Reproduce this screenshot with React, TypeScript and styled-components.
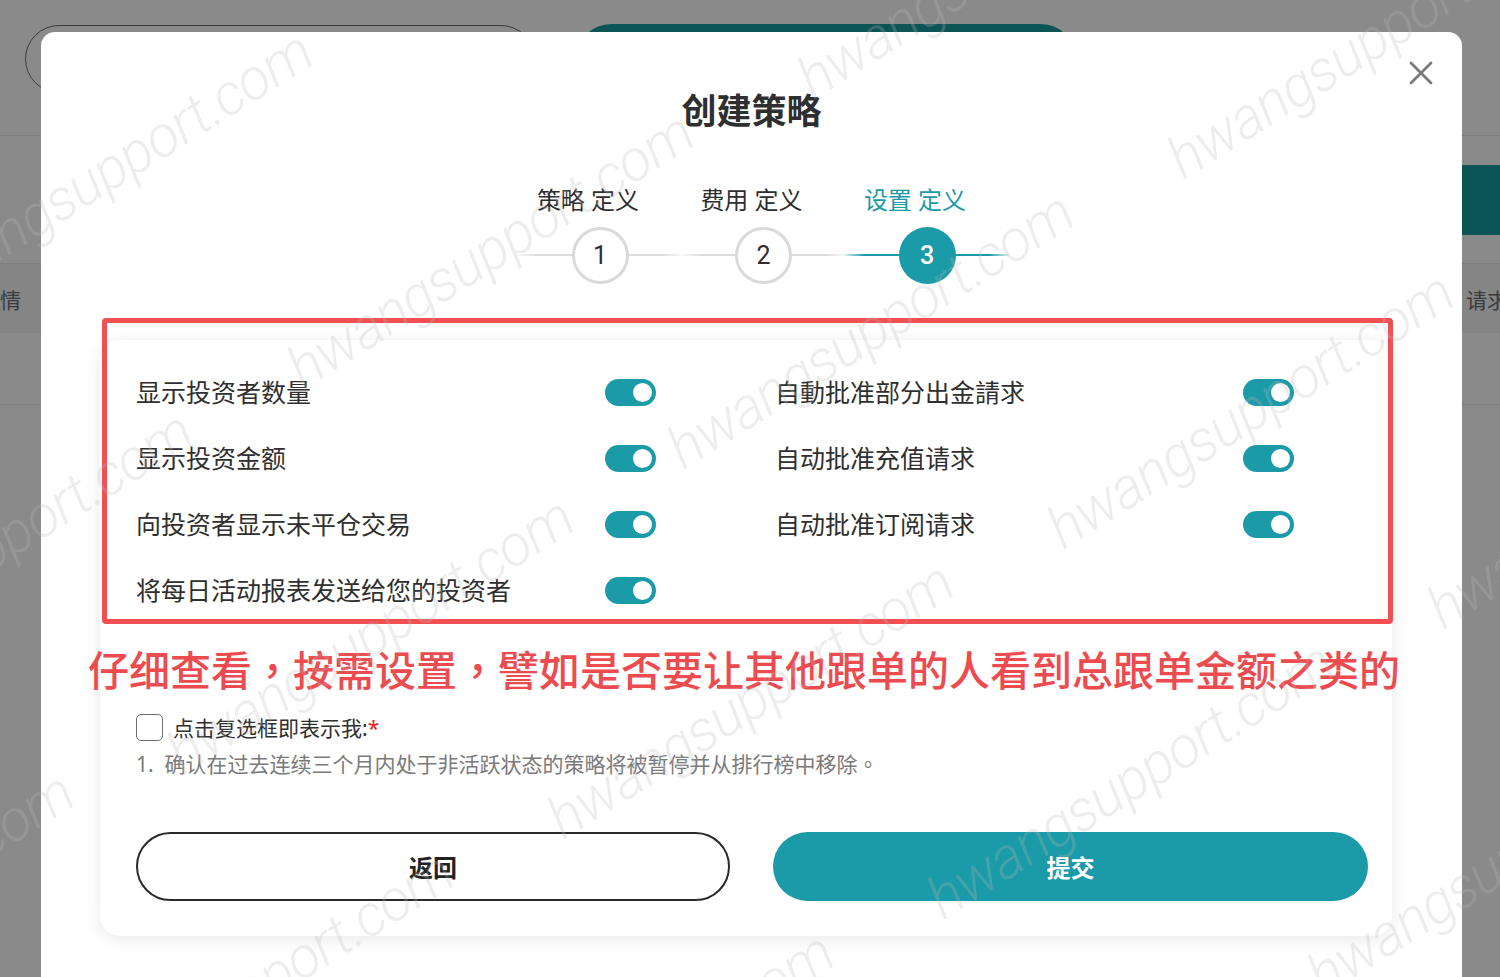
import React from "react";
import styled, { createGlobalStyle } from "styled-components";

const GlobalStyle = createGlobalStyle`
  html, body {
    margin: 0;
    padding: 0;
    width: 1500px;
    height: 977px;
    overflow: hidden;
    font-family: "Noto Sans", "Noto Sans CJK SC", sans-serif;
  }
  * { box-sizing: border-box; }
`;

const TEAL = "#1b9aa7";
const CJK = `"Noto Sans", "Noto Sans CJK SC", sans-serif`;
const CJK_TC = `"Noto Sans", "Noto Sans CJK TC", sans-serif`;

/* ---------- dimmed page behind the dialog ---------- */

const Page = styled.div`
  position: relative;
  width: 1500px;
  height: 977px;
  overflow: hidden;
  background: #8a8a8b;
  display: flex;
  flex-direction: column;
`;

const PageHeader = styled.div`
  height: 136px;
  display: flex;
  align-items: flex-start;
  gap: 42px;
  padding: 24px 0 0 25px;
  border-bottom: 1px solid #7e7e7f;
`;

const GhostPill = styled.div`
  width: 510px;
  height: 68px;
  margin-top: 1px;
  border: 1.5px solid #3d3d3e;
  border-radius: 34px;
`;

const SolidPill = styled.div`
  width: 498px;
  height: 68px;
  border-radius: 34px;
  background: #0d5457;
`;

const Toolbar = styled.div`
  height: 128px;
  display: flex;
  justify-content: flex-end;
  align-items: flex-start;
  padding-top: 29px;
  border-bottom: 1px solid #7e7e7f;
`;

const ToolbarButton = styled.div`
  width: 220px;
  height: 70px;
  background: #0d5457;
`;

const TableHead = styled.div`
  height: 69px;
  display: flex;
  align-items: center;
  justify-content: space-between;
  background: #858586;
  color: #3b3b3c;
  font-family: ${CJK};
  font-size: 21px;
`;

const HeadCell = styled.span<{ $shift: number }>`
  margin-left: ${(p) => p.$shift}px;
  white-space: nowrap;
`;

const TableRow = styled.div`
  height: 72px;
  border-bottom: 1px solid #7e7e7f;
`;

/* ---------- dialog ---------- */

const Overlay = styled.div`
  position: absolute;
  inset: 0;
  padding: 32px 0 0 41px;
  overflow: hidden;
`;

const Modal = styled.div`
  position: relative;
  width: 1421px;
  height: 1000px;
  background: #ffffff;
  border-radius: 14px;
  display: flex;
  flex-direction: column;
  align-items: center;
  padding-top: 57px;
`;

const CloseButton = styled.button`
  position: absolute;
  top: 28px;
  right: 28px;
  width: 26px;
  height: 26px;
  padding: 0;
  border: 0;
  background: none;
  color: #7a7a7a;
  display: flex;
`;

const Title = styled.h1`
  margin: 0;
  font-family: ${CJK};
  font-size: 35px;
  line-height: 44px;
  font-weight: 700;
  color: #2f2f2f;
`;

const Stepper = styled.div`
  display: flex;
  margin-top: 52px;
`;

const Step = styled.div`
  width: 163.5px;
  display: flex;
  flex-direction: column;
  align-items: center;
`;

const StepLabel = styled.div<{ $active?: boolean }>`
  font-family: ${CJK};
  font-size: 24px;
  line-height: 30px;
  color: ${(p) => (p.$active ? TEAL : "#2e2e2e")};
  white-space: pre;
`;

const StepTrack = styled.div<{ $active?: boolean }>`
  position: relative;
  width: 100%;
  height: 58px;
  margin-top: 11px;
  margin-left: 24px;
  display: flex;
  align-items: center;
  justify-content: center;
  background: linear-gradient(
      90deg,
      ${(p) => (p.$active ? "rgba(27,154,167,0.15)" : "rgba(221,221,221,0.2)")} 0%,
      ${(p) => (p.$active ? TEAL : "#dcdcdc")} 12%,
      ${(p) => (p.$active ? TEAL : "#dcdcdc")} 88%,
      ${(p) => (p.$active ? "rgba(27,154,167,0.15)" : "rgba(221,221,221,0.2)")} 100%
    )
    center / 100% 2px no-repeat;
`;

const StepCircle = styled.div<{ $active?: boolean }>`
  width: 57px;
  height: 57px;
  border-radius: 50%;
  display: flex;
  align-items: center;
  justify-content: center;
  font-family: "Roboto", "Noto Sans", sans-serif;
  font-size: 25px;
  font-weight: ${(p) => (p.$active ? 500 : 400)};
  color: ${(p) => (p.$active ? "#ffffff" : "#2e2e2e")};
  background: ${(p) => (p.$active ? TEAL : "#ffffff")};
  border: ${(p) => (p.$active ? "none" : "3px solid #dadada")};
`;

const Card = styled.div`
  position: relative;
  align-self: flex-start;
  width: 1292px;
  margin: 56px 0 0 59px;
  padding: 18px 0 35px 36px;
  background: #ffffff;
  border-radius: 20px;
  box-shadow: 0 3px 18px rgba(0, 0, 0, 0.09);
`;

const Highlight = styled.div`
  position: absolute;
  top: -22px;
  left: 2px;
  width: 1291px;
  height: 306px;
  border: 5px solid #f24f53;
  border-radius: 4px;
  pointer-events: none;
`;

const SettingsGrid = styled.div`
  display: grid;
  grid-template-columns: 520px 519px;
  column-gap: 119px;
`;

const SettingRow = styled.div`
  height: 66px;
  display: flex;
  align-items: center;
  justify-content: space-between;
`;

const SettingLabel = styled.span`
  font-family: ${CJK};
  font-size: 25px;
  color: #2f2f2f;
`;

const Toggle = styled.span`
  position: relative;
  width: 51px;
  height: 27px;
  margin-top: 2px;
  border-radius: 14px;
  background: ${TEAL};
  display: flex;
  align-items: center;
  justify-content: flex-end;
  padding-right: 4px;
`;

const Knob = styled.span`
  width: 19px;
  height: 19px;
  border-radius: 50%;
  background: #ffffff;
`;

const Note = styled.div`
  margin: 23px 0 0 -48px;
  font-family: ${CJK_TC};
  font-size: 41px;
  line-height: 50px;
  font-weight: 500;
  color: #ec4b50;
  white-space: nowrap;
`;

const AgreeRow = styled.label`
  display: flex;
  align-items: center;
  gap: 10px;
  margin-top: 17px;
  font-family: ${CJK};
  font-size: 21px;
  color: #2f2f2f;
`;

const CheckBox = styled.span`
  width: 27px;
  height: 27px;
  border: 1.5px solid #6f6f6f;
  border-radius: 5px;
`;

const Required = styled.span`
  color: #e02020;
`;

const Terms = styled.div`
  margin-top: 8px;
  font-family: ${CJK_TC};
  font-size: 21px;
  line-height: 28px;
  color: #7a7a7a;
  white-space: pre;
`;

const Actions = styled.div`
  display: grid;
  grid-template-columns: 594px 595px;
  column-gap: 43px;
  margin-top: 54px;
`;

const ActionButton = styled.button<{ $primary?: boolean }>`
  height: 69px;
  border-radius: 35px;
  font-family: ${CJK};
  font-size: 24px;
  font-weight: 700;
  color: ${(p) => (p.$primary ? "#ffffff" : "#222222")};
  background: ${(p) => (p.$primary ? TEAL : "#ffffff")};
  border: ${(p) => (p.$primary ? "none" : "2px solid #2a2a2a")};
`;

/* ---------- site watermark ---------- */

const MarkLayer = styled.div`
  position: absolute;
  inset: 0;
  pointer-events: none;
  overflow: hidden;
`;

const Mark = styled.span`
  position: absolute;
  transform: translate(-50%, -50%) rotate(-32deg);
  font-family: "Roboto", "DejaVu Sans", sans-serif;
  font-weight: 300;
  font-style: italic;
  font-size: 58px;
  letter-spacing: -1px;
  color: rgba(185, 185, 185, 0.26);
  white-space: nowrap;
`;

const marks: Array<[number, number]> = [
  [109, 169],
  [490, 250],
  [1000, -40],
  [1370, 40],
  [870, 330],
  [-11, 549],
  [370, 635],
  [1250, 410],
  [750, 700],
  [1630, 490],
  [-130, 910],
  [1130, 780],
  [250, 990],
  [1510, 857],
  [630, 1070],
];

const leftSettings = [
  "显示投资者数量",
  "显示投资金额",
  "向投资者显示未平仓交易",
  "将每日活动报表发送给您的投资者",
];

const rightSettings = ["自動批准部分出金請求", "自动批准充值请求", "自动批准订阅请求"];

const steps = ["策略 定义", "费用 定义", "设置 定义"];

function SettingColumn({ items }: { items: string[] }) {
  return (
    <div>
      {items.map((label) => (
        <SettingRow key={label}>
          <SettingLabel>{label}</SettingLabel>
          <Toggle>
            <Knob />
          </Toggle>
        </SettingRow>
      ))}
    </div>
  );
}

export default function App() {
  return (
    <>
      <GlobalStyle />
      <Page>
        <PageHeader>
          <GhostPill />
          <SolidPill />
        </PageHeader>
        <Toolbar>
          <ToolbarButton />
        </Toolbar>
        <TableHead>
          <HeadCell $shift={-21}>详情</HeadCell>
          <HeadCell $shift={0} style={{ marginRight: -8 }}>请求</HeadCell>
        </TableHead>
        <TableRow />

        <Overlay>
          <Modal>
            <CloseButton aria-label="关闭">
              <svg width="26" height="26" viewBox="0 0 26 26">
                <path
                  d="M3 3 L23 23 M23 3 L3 23"
                  stroke="currentColor"
                  strokeWidth="2.8"
                  strokeLinecap="round"
                  fill="none"
                />
              </svg>
            </CloseButton>
            <Title>创建策略</Title>
            <Stepper>
              {steps.map((s, i) => (
                <Step key={s}>
                  <StepLabel $active={i === 2}>{s}</StepLabel>
                  <StepTrack $active={i === 2}>
                    <StepCircle $active={i === 2}>{i + 1}</StepCircle>
                  </StepTrack>
                </Step>
              ))}
            </Stepper>

            <Card>
              <Highlight />
              <SettingsGrid>
                <SettingColumn items={leftSettings} />
                <SettingColumn items={rightSettings} />
              </SettingsGrid>
              <Note>仔细查看，按需设置，譬如是否要让其他跟单的人看到总跟单金额之类的</Note>
              <AgreeRow>
                <CheckBox />
                <span>
                  点击复选框即表示我:<Required>*</Required>
                </span>
              </AgreeRow>
              <Terms>{"1.  确认在过去连续三个月内处于非活跃状态的策略将被暂停并从排行榜中移除。"}</Terms>
              <Actions>
                <ActionButton>返回</ActionButton>
                <ActionButton $primary>提交</ActionButton>
              </Actions>
            </Card>
          </Modal>
        </Overlay>

        <MarkLayer>
          {marks.map(([x, y], i) => (
            <Mark key={i} style={{ left: x, top: y }}>
              hwangsupport.com
            </Mark>
          ))}
        </MarkLayer>
      </Page>
    </>
  );
}
